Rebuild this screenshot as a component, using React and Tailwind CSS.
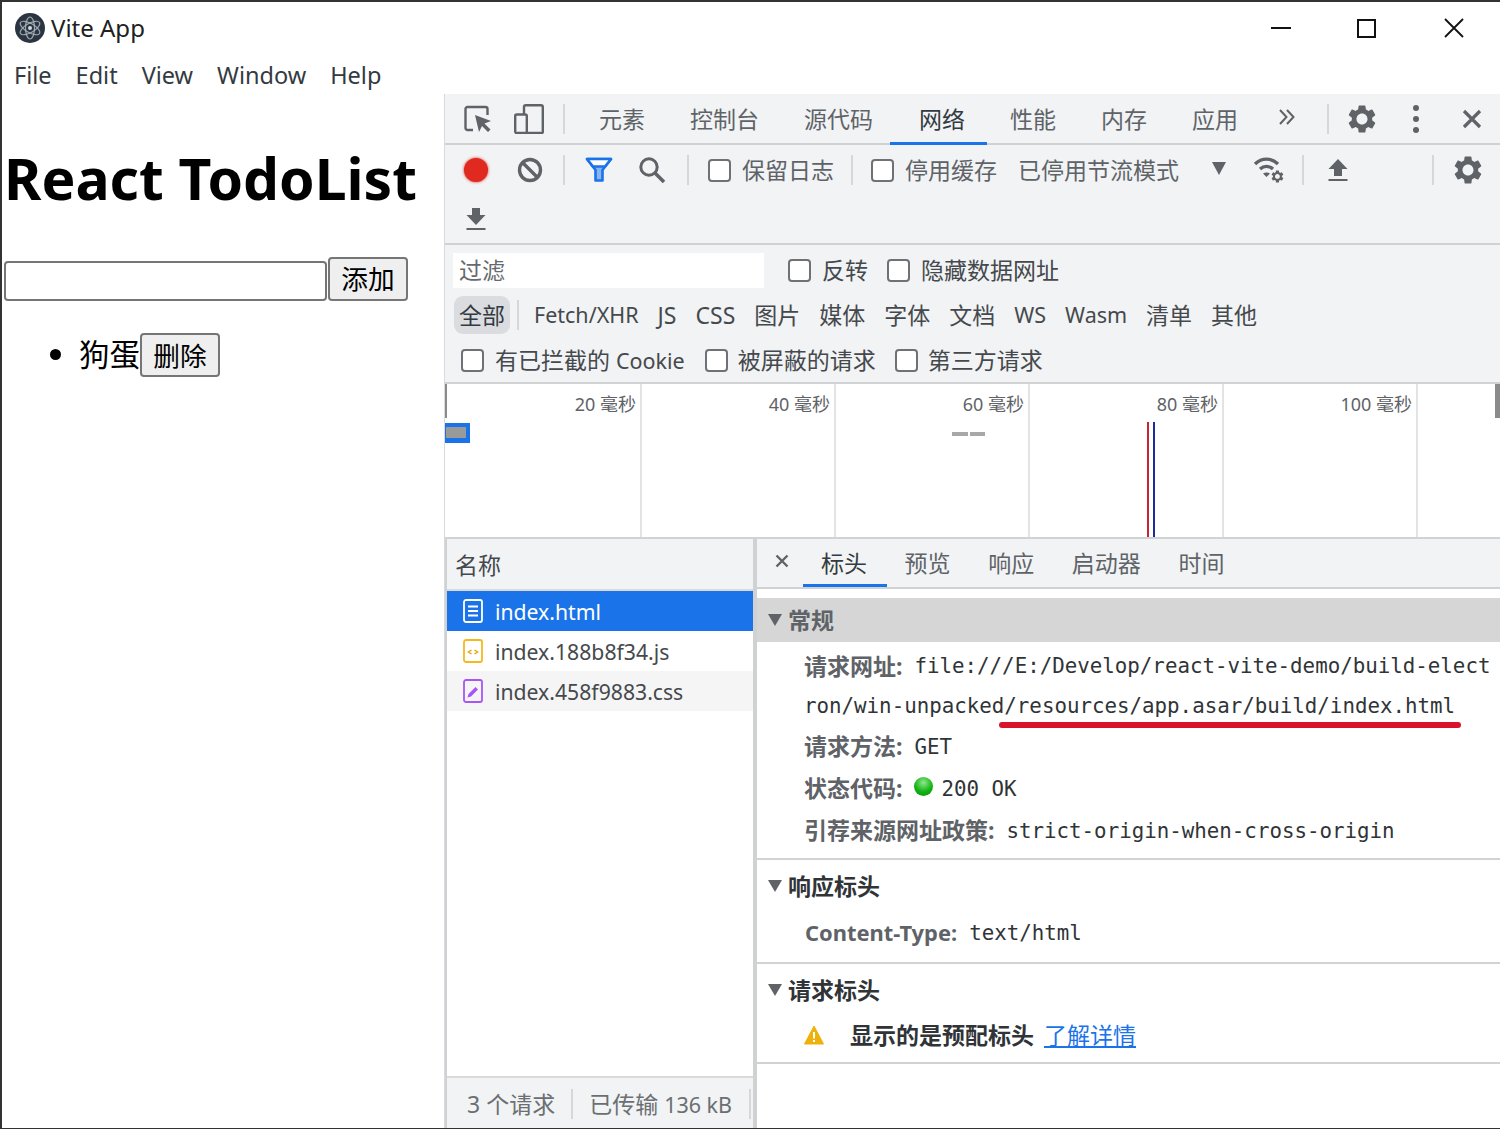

const gear = "M19.14 12.94c.04-.3.06-.61.06-.94 0-.32-.02-.64-.07-.94l2.03-1.58a.49.49 0 0 0 .12-.61l-1.92-3.32a.488.488 0 0 0-.59-.22l-2.39.96c-.5-.38-1.03-.7-1.62-.94l-.36-2.54a.484.484 0 0 0-.48-.41h-3.84c-.24 0-.43.17-.47.41l-.36 2.54c-.59.24-1.13.57-1.62.94l-2.39-.96c-.22-.08-.47 0-.59.22L2.74 8.87c-.12.21-.08.47.12.61l2.03 1.58c-.05.3-.09.63-.09.94s.02.64.07.94l-2.03 1.58a.49.49 0 0 0-.12.61l1.92 3.32c.12.22.37.29.59.22l2.39-.96c.5.38 1.03.7 1.62.94l.36 2.54c.05.24.24.41.48.41h3.84c.24 0 .44-.17.47-.41l.36-2.54c.59-.24 1.13-.56 1.62-.94l2.39.96c.22.08.47 0 .59-.22l1.92-3.32c.12-.22.07-.47-.12-.61l-2.01-1.58zM12 15.9c-2.15 0-3.9-1.75-3.9-3.9s1.75-3.9 3.9-3.9 3.9 1.75 3.9 3.9-1.750 3.9-3.9 3.9z";

const Gear = ({ className }) => (
  <svg viewBox="0 0 24 24" className={className} fill="#5f6368"><path d={gear} /></svg>
);
const Sep = ({ className }) => <div className={"w-[2px] h-[30px] bg-[#d5d7d9] shrink-0 " + className} />;
const Box = ({ className }) => (
  <span className={"w-[23px] h-[23px] shrink-0 rounded-[4px] border-2 border-[#6e7175] bg-white " + className} />
);

function Tabs() {
  const items = [["元素", "ml-[34px]"], ["控制台", "ml-[45px]"], ["源代码", "ml-[45px]"], ["网络", "ml-[46px]"], ["性能", "ml-[45px]"], ["内存", "ml-[45px]"], ["应用", "ml-[45px]"]];
  return (
    <div className="h-[51px] shrink-0 flex items-center pl-[19px] border-b-2 border-[#cfd1d3] relative">
      <svg viewBox="0 0 28 28" className="w-[28px] h-[28px] shrink-0" fill="none">
        <path d="M9 25H3.500a2 2 0 0 1-2-2V4a2 2 0 0 1 2-2h18a2 2 0 0 1 2 2v6" stroke="#5f6368" strokeWidth="2.400" />
        <path d="M11 10l16 6-6.500 2.500 6 6-2.500 2.500-6-6L15 27z" fill="#5f6368" />
      </svg>
      <svg viewBox="0 0 30 30" className="w-[30px] h-[30px] ml-[22px] shrink-0" fill="none" stroke="#5f6368" strokeWidth="2.400">
        <path d="M10 10V3a1.800 1.800 0 0 1 1.800-1.800H27A1.800 1.800 0 0 1 28.800 3v25a1 1 0 0 1-1 1H12" />
        <rect x="1.200" y="10.500" width="11.600" height="18.500" rx="1.500" />
      </svg>
      <Sep className="ml-[19px]" />
      {items.map(([t, m]) => (
        <span key={t} className={"relative text-[23px] leading-[30px] " + m + (t === "网络" ? " text-[#333a41]" : " text-[#5f6368]")}>
          {t}
          {t === "网络" && <span className="absolute left-[-29px] right-[-22px] top-[38px] h-[3px] bg-[#1a73e8]" />}
        </span>
      ))}
      <svg viewBox="0 0 18 18" className="w-[18px] h-[18px] ml-[40px] mb-[3px] shrink-0" fill="none" stroke="#5f6368" strokeWidth="2">
        <path d="M2 2l6.500 7L2 16M9 2l6.500 7L9 16" />
      </svg>
      <Sep className="ml-[31px]" />
      <Gear className="w-[34px] h-[34px] ml-[16px] shrink-0" />
      <div className="ml-[34px] flex flex-col gap-[5px] shrink-0">
        <span className="w-[6px] h-[6px] rounded-full bg-[#5f6368]" />
        <span className="w-[6px] h-[6px] rounded-full bg-[#5f6368]" />
        <span className="w-[6px] h-[6px] rounded-full bg-[#5f6368]" />
      </div>
      <svg viewBox="0 0 20 20" className="w-[20px] h-[20px] ml-[43px] shrink-0" fill="none" stroke="#5f6368" strokeWidth="3.200">
        <path d="M2 2l16 16M18 2L2 18" />
      </svg>
    </div>
  );
}

function Toolbar() {
  return (
    <div className="h-[100px] shrink-0 flex flex-col border-b-2 border-[#cfd1d3]">
      <div className="h-[50px] flex items-center pl-[19px]">
        <span className="w-[24px] h-[24px] rounded-full bg-[#e0291f] shadow-[0_0_3px_#e0291f] shrink-0" />
        <svg viewBox="0 0 26 26" className="w-[26px] h-[26px] ml-[29px] shrink-0" fill="none" stroke="#5f6368" strokeWidth="3.400">
          <circle cx="13" cy="13" r="10.500" />
          <path d="M5.500 5.500l15 15" />
        </svg>
        <Sep className="ml-[20px]" />
        <svg viewBox="0 0 28 26" className="w-[28px] h-[26px] ml-[20px] shrink-0">
          <path d="M2 2h24L17.500 13v10.500h-7V13z" fill="#8ab4f0" stroke="#1a73e8" strokeWidth="2.600" strokeLinejoin="round" />
          <path d="M2 2h24l-6 7.500H8z" fill="#fff" stroke="#1a73e8" strokeWidth="2.600" strokeLinejoin="round" />
        </svg>
        <svg viewBox="0 0 28 28" className="w-[28px] h-[28px] ml-[25px] shrink-0" fill="none" stroke="#5f6368">
          <circle cx="11" cy="11" r="8.200" strokeWidth="3" />
          <path d="M17 17l9 9" strokeWidth="3.600" />
        </svg>
        <Sep className="ml-[21px]" />
        <Box className="ml-[19px]" />
        <span className="ml-[11px] text-[23px] leading-[30px] text-[#5f6368]">保留日志</span>
        <Sep className="ml-[17px]" />
        <Box className="ml-[18px]" />
        <span className="ml-[11px] text-[23px] leading-[30px] text-[#5f6368]">停用缓存</span>
        <span className="ml-[21px] text-[23px] leading-[30px] text-[#5f6368]">已停用节流模式</span>
        <span className="ml-[33px] mb-[4px] w-0 h-0 shrink-0 border-l-[7px] border-r-[7px] border-t-[13px] border-l-transparent border-r-transparent border-t-[#5f6368]" />
        <svg viewBox="0 0 32 28" className="w-[32px] h-[28px] ml-[27px] shrink-0" fill="none" stroke="#5f6368" strokeWidth="3.400">
          <path d="M2 8c7-6.500 16-6.500 23 0M7 13c4-3.500 9-3.500 13 0" />
          <path d="M13.500 21l-3.500-3.500c2-1.500 5-1.500 7 0z" fill="#5f6368" stroke="none" />
          <g transform="translate(17 13) scale(.62)" stroke="none" fill="#5f6368"><path d={gear} /></g>
        </svg>
        <Sep className="ml-[17px]" />
        <svg viewBox="0 0 20 24" className="w-[20px] h-[24px] ml-[24px] shrink-0" fill="#5f6368">
          <path d="M10 1l9.500 10H14v7H6v-7H.5zM.5 21h19v2H.5z" />
        </svg>
        <Sep className="ml-[84px]" />
        <Gear className="w-[34px] h-[34px] ml-[17px] shrink-0" />
      </div>
      <div className="h-[48px] flex items-center pl-[21px]">
        <svg viewBox="0 0 20 24" className="w-[20px] h-[24px] shrink-0" fill="#5f6368">
          <path d="M6 1h8v7h5.500L10 18 .5 8H6zM.5 21h19v2H.5z" />
        </svg>
      </div>
    </div>
  );
}

function Filters() {
  const types = [["Fetch/XHR", 1], ["JS", 0], ["CSS", 0], ["图片", 0], ["媒体", 0], ["字体", 0], ["文档", 0], ["WS", 1], ["Wasm", 1], ["清单", 0], ["其他", 0]];
  return (
    <div className="h-[137px] shrink-0 flex flex-col">
      <div className="h-[50px] flex items-center pl-[8px]">
        <div className="w-[311px] h-[35px] bg-white flex items-center pl-[6px] text-[23px] text-[#666a6e]">过滤</div>
        <Box className="ml-[24px]" />
        <span className="ml-[11px] text-[23px] leading-[30px] text-[#45494d]">反转</span>
        <Box className="ml-[19px]" />
        <span className="ml-[11px] text-[23px] leading-[30px] text-[#45494d]">隐藏数据网址</span>
      </div>
      <div className="h-[40px] flex items-center pl-[9px]">
        <span className="w-[56px] h-[38px] rounded-[9px] bg-[#dadce0] flex items-center justify-center text-[23px] text-[#333a41]">全部</span>
        <div className="w-[2px] h-[30px] bg-[#d5d7d9] ml-[7px] mr-[15px] shrink-0" />
        <div className="flex items-center gap-[19px] text-[23px] leading-[30px] text-[#45494d]">
          {types.map(([t, latin]) => <span key={t} className={latin ? "text-[21.500px]" : ""}>{t}</span>)}
        </div>
      </div>
      <div className="h-[47px] flex items-center pl-[16px] pt-[3px]">
        <Box />
        <span className="ml-[11px] text-[23px] leading-[30px] text-[#45494d]">有已拦截的 <span className="text-[21.500px]">Cookie</span></span>
        <Box className="ml-[20px]" />
        <span className="ml-[10px] text-[23px] leading-[30px] text-[#45494d]">被屏蔽的请求</span>
        <Box className="ml-[19px]" />
        <span className="ml-[10px] text-[23px] leading-[30px] text-[#45494d]">第三方请求</span>
      </div>
    </div>
  );
}

function Timeline() {
  const labels = ["20 毫秒", "40 毫秒", "60 毫秒", "80 毫秒", "100 毫秒"];
  return (
    <div className="h-[157px] shrink-0 relative flex bg-white border-t-2 border-b-2 border-[#d0d2d4] pl-[3px]">
      {labels.map((l) => (
        <div key={l} className="w-[194px] shrink-0 border-r-2 border-[#e3e3e3] text-right pr-[4px] pt-[8px] text-[18px] leading-[24px] text-[#5f6368]">{l}</div>
      ))}
      <div className="absolute left-0 top-0 w-[2px] h-[34px] bg-[#8b8b8b]" />
      <div className="absolute right-0 top-0 w-[5px] h-[34px] bg-[#8b8b8b]" />
      <div className="absolute left-0 top-[39px] w-[25px] h-[20px] bg-[#1a73e8] pl-[1px] pt-[4px]">
        <div className="w-[20px] h-[11px] bg-[#9a9a9a]" />
      </div>
      <div className="absolute left-[507px] top-[48px] w-[16px] h-[4px] bg-[#a8a8a8]" />
      <div className="absolute left-[525px] top-[48px] w-[15px] h-[4px] bg-[#a8a8a8]" />
      <div className="absolute left-[702px] top-[38px] bottom-0 w-[2px] bg-[#c8242f]" />
      <div className="absolute left-[708px] top-[38px] bottom-0 w-[2px] bg-[#1d2a9e]" />
    </div>
  );
}

function FileIcon({ kind }) {
  if (kind === "html")
    return (
      <svg viewBox="0 0 20 24" className="w-[20px] h-[24px] shrink-0" fill="none" stroke="#fff" strokeWidth="1.800">
        <rect x="1" y="1" width="18" height="22" rx="2" />
        <path d="M5 7.500h10M5 12h10M5 16.500h10" />
      </svg>
    );
  if (kind === "js")
    return (
      <svg viewBox="0 0 20 24" className="w-[20px] h-[24px] shrink-0" fill="none" stroke="#f5b91e" strokeWidth="1.800">
        <rect x="1" y="1" width="18" height="22" rx="2" />
        <path d="M8.500 11L5.500 13l3 2M11.500 11l3 2-3 2" strokeWidth="1.500" stroke="#e8a70c" />
      </svg>
    );
  return (
    <svg viewBox="0 0 20 24" className="w-[20px] h-[24px] shrink-0" fill="none" stroke="#a855f7" strokeWidth="1.800">
      <rect x="1" y="1" width="18" height="22" rx="2" />
      <path d="M4.500 18.500l1-3.500 7-7 2.500 2.500-7 7z" fill="#a855f7" stroke="none" />
    </svg>
  );
}

function NameColumn() {
  const rows = [
    ["html", "index.html", "bg-[#1a73e8] text-white"],
    ["js", "index.188b8f34.js", "bg-white text-[#45494d]"],
    ["css", "index.458f9883.css", "bg-[#f5f5f5] text-[#45494d]"],
  ];
  return (
    <div className="w-[310px] shrink-0 flex flex-col border-r-[4px] border-[#cfd1d3]">
      <div className="h-[52px] shrink-0 bg-[#f1f3f4] border-b-2 border-[#d8dadc] flex items-center pl-[8px] pt-[3px] text-[23px] text-[#45494d]">名称</div>
      {rows.map(([k, t, c]) => (
        <div key={t} className={"h-[40px] shrink-0 flex items-center pl-[16px] gap-[12px] text-[21.200px] " + c}>
          <FileIcon kind={k} />
          <span className="mt-[2px]">{t}</span>
        </div>
      ))}
      <div className="flex-1" />
      <div className="h-[52px] shrink-0 bg-[#f1f3f4] border-t-2 border-[#d8dadc] flex items-center pl-[20px] pt-[2px] text-[23px] text-[#6b6f73] whitespace-nowrap">
        <span>3 个请求</span>
        <div className="w-[2px] h-[30px] bg-[#d5d7d9] ml-[16px] mr-[16px] shrink-0" />
        <span>已传输 <span className="text-[21.500px]">136 kB</span></span>
        <div className="w-[2px] h-[30px] bg-[#d5d7d9] ml-[17px] shrink-0" />
      </div>
    </div>
  );
}

const Tri = () => <span className="w-0 h-0 shrink-0 border-l-[7px] border-r-[7px] border-t-[12px] border-l-transparent border-r-transparent border-t-[#5f6368]" />;

function KV({ k, children, latin }) {
  return (
    <div className="h-[42px] flex items-center pl-[47px] whitespace-nowrap">
      <span className={"font-bold text-[#5f6368] " + (latin ? "text-[21.900px] ml-[1px]" : "text-[23px]")}>{k}</span>
      {children}
    </div>
  );
}
const mono = "font-['DejaVu_Sans_Mono','Noto_Sans_CJK_SC',monospace] text-[20.800px] text-[#303437]";

function Detail() {
  const tabs = ["预览", "响应", "启动器", "时间"];
  return (
    <div className="flex-1 min-w-0 flex flex-col bg-white overflow-hidden">
      <div className="h-[50px] shrink-0 bg-[#f1f3f4] border-b-2 border-[#cfd1d3] flex items-center pl-[18px]">
        <svg viewBox="0 0 14 14" className="w-[14px] h-[14px] mb-[4px] shrink-0" fill="none" stroke="#5f6368" strokeWidth="2.400">
          <path d="M1.500 1.500l11 11M12.500 1.500l-11 11" />
        </svg>
        <span className="relative ml-[32px] text-[23px] leading-[30px] text-[#333a41]">
          标头
          <span className="absolute left-[-18px] right-[-20px] top-[36px] h-[3px] bg-[#1a73e8]" />
        </span>
        {tabs.map((t) => (
          <span key={t} className="ml-[37.600px] text-[23px] leading-[30px] text-[#5f6368]">{t}</span>
        ))}
      </div>
      <div className="h-[9px] shrink-0" />
      <div className="h-[44px] shrink-0 bg-[#d6d6d6] flex items-center pl-[11px] gap-[6px]">
        <Tri />
        <span className="text-[23px] font-bold text-[#5f6368]">常规</span>
      </div>
      <div className="h-[218px] shrink-0 pt-[3px] border-b-2 border-[#d0d2d4]">
        <KV k="请求网址:">
          <span className={mono + " ml-[12px] mt-[2px]"}>file:///E:/Develop/react-vite-demo/build-elect</span>
        </KV>
        <div className={"h-[38px] flex items-center pl-[47px] pt-[1px] whitespace-nowrap relative " + mono}>
          ron/win-unpacked/resources/app.asar/build/index.html
          <span className="absolute left-[242px] top-[35px] w-[462px] h-[6px] rounded-full bg-[#d9132b]" />
        </div>
        <KV k="请求方法:"><span className={mono + " ml-[12px] mt-[4px]"}>GET</span></KV>
        <KV k="状态代码:">
          <span className="ml-[12px] w-[19px] h-[19px] mb-[4px] rounded-full shrink-0 bg-[radial-gradient(circle_at_50%_30%,#8ee88e,#12b312_55%,#0a8f0a)]" />
          <span className={mono + " ml-[8px] mt-[4px]"}>200 OK</span>
        </KV>
        <KV k="引荐来源网址政策:"><span className={mono + " ml-[12px] mt-[4px]"}>strict-origin-when-cross-origin</span></KV>
      </div>
      <div className="h-[104px] shrink-0 border-b-2 border-[#d0d2d4] flex flex-col">
        <div className="h-[52px] flex items-center pl-[11px] gap-[6px]">
          <Tri />
          <span className="text-[23px] font-bold text-[#303437]">响应标头</span>
        </div>
        <KV k="Content-Type:" latin><span className={mono + " ml-[12px] mt-[2px]"}>text/html</span></KV>
      </div>
      <div className="h-[100px] shrink-0 border-b-2 border-[#d0d2d4] flex flex-col">
        <div className="h-[52px] flex items-center pl-[11px] gap-[6px]">
          <Tri />
          <span className="text-[23px] font-bold text-[#303437]">请求标头</span>
        </div>
        <div className="h-[38px] flex items-center pl-[47px]">
          <svg viewBox="0 0 20 20" className="w-[20px] h-[20px] shrink-0">
            <path d="M10 1l9.500 18H.5z" fill="#eeb10b" stroke="#eeb10b" strokeLinejoin="round" />
            <path d="M9 7h2v6.500H9zM9 15h2v2H9z" fill="#fff" />
          </svg>
          <span className="ml-[26px] text-[23px] font-bold text-[#303437]">显示的是预配标头</span>
          <span className="ml-[10px] text-[23px] text-[#1a73e8] underline">了解详情</span>
        </div>
      </div>
    </div>
  );
}

export default function App() {
  return (
    <div className="w-[1500px] h-[1129px] overflow-hidden bg-white border-t-2 border-l-2 border-b border-[#333333] flex flex-col font-['Noto_Sans','Noto_Sans_CJK_SC',sans-serif]">
      <div className="h-[52px] shrink-0 flex items-center pl-[13px] pr-[36px]">
        <svg viewBox="0 0 30 30" className="w-[30px] h-[30px] shrink-0">
          <circle cx="15" cy="15" r="15" fill="#2b3441" />
          <g fill="none" stroke="#aeb8c0" strokeOpacity=".85" strokeWidth="1.200">
            <ellipse cx="15" cy="15" rx="11" ry="4.500" transform="rotate(30 15 15)" />
            <ellipse cx="15" cy="15" rx="11" ry="4.500" transform="rotate(90 15 15)" />
            <ellipse cx="15" cy="15" rx="11" ry="4.500" transform="rotate(150 15 15)" />
          </g>
          <circle cx="15" cy="15" r="2" fill="#cfd8de" />
        </svg>
        <span className="ml-[6px] text-[24px] leading-[30px] text-[#202020]">Vite App</span>
        <div className="ml-auto flex items-center">
          <div className="w-[20px] h-[2px] bg-[#111111]" />
          <div className="w-[19px] h-[19px] border-2 border-[#111111] ml-[66px]" />
          <svg viewBox="0 0 20 20" className="w-[20px] h-[20px] ml-[68px]" fill="none" stroke="#111111" strokeWidth="1.800">
            <path d="M1 1l18 18M19 1L1 19" />
          </svg>
        </div>
      </div>
      <div className="h-[40px] shrink-0 flex items-center pl-[12px] pt-[1px] gap-[24px] text-[23.500px] leading-[30px] text-[#333a41]">
        <span>File</span><span>Edit</span><span>View</span><span>Window</span><span>Help</span>
      </div>
      <div className="flex-1 min-h-0 flex">
        <div className="w-[442px] shrink-0 relative">
          <h1 className="pl-[2px] pt-[48px] text-[57px] leading-[72px] font-bold text-black whitespace-nowrap">React TodoList</h1>
          <div className="mt-[43px] pl-[2px] flex items-end">
            <div className="w-[323px] h-[40px] rounded-[4px] border-2 border-[#767676] bg-white shrink-0" />
            <div className="ml-[1px] w-[80px] h-[44px] rounded-[4px] border-2 border-[#767676] bg-[#efefef] flex items-center justify-center text-[26.700px] text-black">添加</div>
          </div>
          <ul className="mt-[31px] pl-[77px] list-disc text-[30.500px] text-black">
            <li className="h-[44px]">
              <div className="flex items-center h-[44px]">
                <span>狗蛋</span>
                <div className="w-[80px] h-[44px] rounded-[4px] border-2 border-[#767676] bg-[#efefef] flex items-center justify-center pt-[3px] text-[26.700px]">删除</div>
              </div>
            </li>
          </ul>
        </div>
        <div className="flex-1 min-w-0 flex flex-col bg-[#f1f3f4] border-l border-[#d8dadc]">
          <Tabs />
          <Toolbar />
          <Filters />
          <Timeline />
          <div className="flex-1 min-h-0 flex bg-white border-l-2 border-[#cfd1d3]">
            <NameColumn />
            <Detail />
          </div>
        </div>
      </div>
    </div>
  );
}
